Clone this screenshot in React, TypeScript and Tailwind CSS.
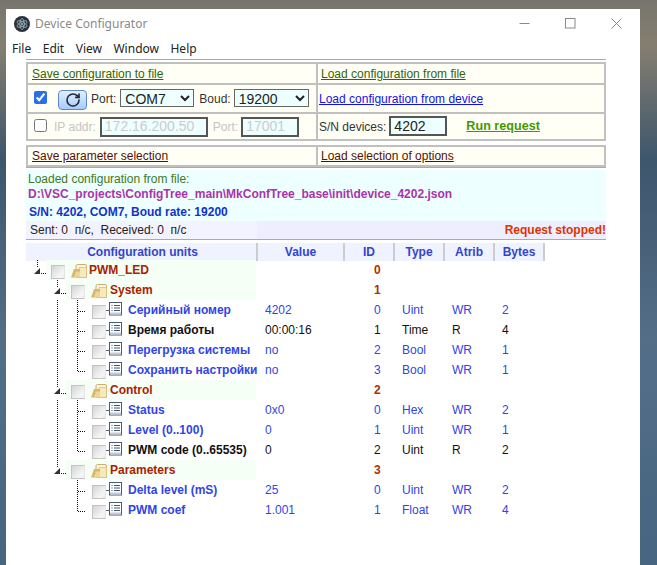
import React from "react";
import { RotateCw } from "lucide-react";

const ARIAL = "font-['Liberation_Sans',Arial,sans-serif]";

function CheckBoxIcon() {
  return (
    <span className="block w-[14px] h-[14px] shrink-0 border border-[#c4c4c4] border-r-[#e4e4e4] bg-[linear-gradient(135deg,#d4d4d4,#f6f6f6_75%,#ececec)]" />
  );
}

function FolderIcon() {
  return (
    <svg width="16" height="14" viewBox="0 0 16 14" className="shrink-0 mt-[2px]">
      <path d="M5 13.5 V2 Q5 0.5 6.5 0.5 H14 Q15.5 0.5 15.5 2 V13.5 Z" fill="#fdf6dc" stroke="#c9ae72" strokeWidth="1" />
      <path d="M8 13.5 V3.5 H15.5 V13.5 Z" fill="#f8e9bb" stroke="#d6bf87" strokeWidth="0.8" />
      <path d="M0 13.5 L3 5 H9 V13.5 Z" fill="#d8b870" />
      <path d="M3 13.5 L5 7.5 H9 V13.5 Z" fill="#ecd595" />
    </svg>
  );
}

function DocIcon() {
  return (
    <svg width="16" height="14" viewBox="0 0 16 14" className="shrink-0 -mt-[2px]">
      <path d="M0 8.5 H3" stroke="#55657a" strokeWidth="1" />
      <rect x="3.5" y="0.5" width="12" height="12.5" fill="#fff" stroke="#4a5a70" strokeWidth="1" />
      <path d="M5.5 3.5 H6.5 M8 3.5 H14 M5.5 6 H6.5 M8 6 H14 M5.5 8.5 H6.5 M8 8.5 H14" stroke="#3f5878" strokeWidth="1" />
      <rect x="4" y="10.5" width="11" height="2" fill="#c5ccd6" />
    </svg>
  );
}

function Connector({ level, trunk, last }: { level: number; trunk: boolean; last: boolean }) {
  const width = level === 0 ? 20 : level === 1 ? 40 : 60;
  const dot = { stroke: "#111", strokeWidth: 1, strokeDasharray: "1 1", fill: "none" } as const;
  return (
    <svg width={width} height="20" viewBox={`0 0 ${width} 20`} className="shrink-0">
      {level === 0 && (
        <>
          <path d="M11.5 0 V8" {...dot} />
          <path d="M8 14 L14 8 V14 Z" fill="#333" />
          <path d="M15 13.5 H20" {...dot} />
        </>
      )}
      {level === 1 && (
        <>
          <path d="M31.5 0 V8" {...dot} />
          <path d="M28 14 L34 8 V14 Z" fill="#333" />
          <path d="M35 13.5 H40" {...dot} />
        </>
      )}
      {level === 2 && (
        <>
          {trunk && <path d="M31.5 0 V20" {...dot} />}
          <path d={last ? "M51.5 0 V11" : "M51.5 0 V20"} {...dot} />
          <path d="M52 11.5 H60" {...dot} />
        </>
      )}
    </svg>
  );
}

type Row = {
  level: number;
  name: string;
  value?: string;
  id: string;
  type?: string;
  atrib?: string;
  bytes?: string;
  ro?: boolean;
  trunk?: boolean;
  last?: boolean;
};

const rows: Row[] = [
  { level: 0, name: "PWM_LED", id: "0" },
  { level: 1, name: "System", id: "1" },
  { level: 2, name: "Серийный номер", value: "4202", id: "0", type: "Uint", atrib: "WR", bytes: "2", trunk: true },
  { level: 2, name: "Время работы", value: "00:00:16", id: "1", type: "Time", atrib: "R", bytes: "4", ro: true, trunk: true },
  { level: 2, name: "Перегрузка системы", value: "no", id: "2", type: "Bool", atrib: "WR", bytes: "1", trunk: true },
  { level: 2, name: "Сохранить настройки", value: "no", id: "3", type: "Bool", atrib: "WR", bytes: "1", trunk: true, last: true },
  { level: 1, name: "Control", id: "2" },
  { level: 2, name: "Status", value: "0x0", id: "0", type: "Hex", atrib: "WR", bytes: "2", trunk: true },
  { level: 2, name: "Level (0..100)", value: "0", id: "1", type: "Uint", atrib: "WR", bytes: "1", trunk: true },
  { level: 2, name: "PWM code (0..65535)", value: "0", id: "2", type: "Uint", atrib: "R", bytes: "2", ro: true, trunk: true, last: true },
  { level: 1, name: "Parameters", id: "3" },
  { level: 2, name: "Delta level (mS)", value: "25", id: "0", type: "Uint", atrib: "WR", bytes: "2" },
  { level: 2, name: "PWM coef", value: "1.001", id: "1", type: "Float", atrib: "WR", bytes: "4", last: true },
];

const GRID = "grid grid-cols-[232px_87px_50px_50px_50px_50px]";
const HEAD = "h-full flex items-center justify-center border-r-2 border-[#cccccc] bg-[#eef3ff]";

function TreeRow({ r }: { r: Row }) {
  const isGroup = r.level < 2;
  const color = r.ro ? "text-[#111111]" : "text-[#2f45e6]";
  return (
    <div className={`${GRID} h-5 items-center text-[12px]`}>
      <div className="flex items-center h-5 w-[232px] overflow-hidden whitespace-nowrap">
        <Connector level={r.level} trunk={!!r.trunk} last={!!r.last} />
        {isGroup ? (
          <div className="flex-1 h-5 flex items-center bg-[#f5fff5] mr-[2px]">
            <span className="ml-[5px] mt-[4px]">
              <CheckBoxIcon />
            </span>
            <span className="ml-[6px]">
              <FolderIcon />
            </span>
            <span className={`${r.level === 1 ? "ml-[3px]" : "ml-[2px]"} font-bold text-[#aa2200]`}>{r.name}</span>
          </div>
        ) : (
          <div className="flex items-center h-5">
            <span className="ml-[6px] mt-[4px]">
              <CheckBoxIcon />
            </span>
            <DocIcon />
            <span className={`ml-[6px] font-bold ${color}`}>{r.name}</span>
          </div>
        )}
      </div>
      <div className={`pl-[7px] ${color}`}>{r.value}</div>
      <div className={isGroup ? "pl-[29px] font-bold text-[#aa3300]" : `pl-[29px] ${color}`}>{r.id}</div>
      <div className={`pl-[7px] ${color}`}>{r.type}</div>
      <div className={`pl-[7px] ${color}`}>{r.atrib}</div>
      <div className={`pl-[7px] ${color}`}>{r.bytes}</div>
    </div>
  );
}

function DarkInput({ value, disabled, w }: { value: string; disabled?: boolean; w: string }) {
  return (
    <input
      readOnly
      value={value}
      disabled={disabled}
      className={`${w} h-[20px] px-[3px] border-2 border-[#555555] bg-[#eeffff] text-[14px] ${ARIAL} ${disabled ? "text-[#cccccc]" : "text-[#222222]"} outline-none`}
    />
  );
}

function Select({ value, w }: { value: string; w: string }) {
  return (
    <select
      value={value}
      onChange={() => {}}
      className={`${w} h-[18px] border border-[#666666] bg-[#eeffff] text-[14px] text-[#222222] ${ARIAL}`}
    >
      <option>{value}</option>
    </select>
  );
}

export default function App() {
  return (
    <div className="w-[657px] h-[565px] overflow-hidden pt-[9px] pl-[6px] bg-[linear-gradient(180deg,#77756e_0%,#857e70_8%,#3e566c_28%,#546e88_60%,#466580_100%)]">
      <div className="w-[634px] h-[556px] bg-white flex flex-col text-[12px]">
        {/* Title bar */}
        <div className="h-[29px] flex items-center pl-[8px] pr-[18px] shrink-0 font-['Noto_Sans',sans-serif]">
          <svg width="16" height="16" viewBox="0 0 16 16" className="shrink-0">
            <circle cx="8" cy="8" r="8" fill="#2b3138" />
            <g fill="none" stroke="#a9c4d4" strokeWidth="0.7">
              <ellipse cx="8" cy="8" rx="5.5" ry="2.2" transform="rotate(30 8 8)" />
              <ellipse cx="8" cy="8" rx="5.5" ry="2.2" transform="rotate(90 8 8)" />
              <ellipse cx="8" cy="8" rx="5.5" ry="2.2" transform="rotate(150 8 8)" />
            </g>
            <circle cx="8" cy="8" r="1" fill="#a9c4d4" />
          </svg>
          <span className="ml-[5px] text-[#8a8a8a]">Device Configurator</span>
          <div className="ml-auto flex items-center gap-[35px]">
            <svg width="11" height="11" viewBox="0 0 11 11"><path d="M0.5 5.5 H10.5" stroke="#8a8a8a" /></svg>
            <svg width="11" height="11" viewBox="0 0 11 11"><rect x="0.5" y="0.5" width="9.5" height="9.5" fill="none" stroke="#8a8a8a" /></svg>
            <svg width="11" height="11" viewBox="0 0 11 11"><path d="M0.5 0.5 L10.5 10.5 M10.5 0.5 L0.5 10.5" stroke="#8a8a8a" /></svg>
          </div>
        </div>
        {/* Menu */}
        <div className="h-[20px] pt-[2px] flex items-center gap-[11.5px] pl-[6px] text-[#222222] shrink-0 font-['Noto_Sans',sans-serif]">
          <span>File</span>
          <span>Edit</span>
          <span>View</span>
          <span>Window</span>
          <span>Help</span>
        </div>
        {/* Content */}
        <div className={`ml-[20px] w-[580px] mt-[1px] ${ARIAL}`}>
          <div className="border-t border-[#aaaaaa] pt-[2px]">
            <div className="grid grid-cols-[288px_286px] gap-[2px] bg-[#c0c0c0] border-[2px] border-[#c0c0c0]">
              <div className="h-[19px] bg-[#fffff6] flex items-center pl-[4px]">
                <a className="underline text-[#336600]">Save configuration to file</a>
              </div>
              <div className="h-[19px] bg-[#fffff6] flex items-center pl-[3px]">
                <a className="underline text-[#336600]">Load configuration from file</a>
              </div>
              <div className="h-[27px] bg-[#fffff6] flex items-center pl-[6px] text-[#333333]">
                <input type="checkbox" checked readOnly className="w-[13px] h-[13px] accent-[#2b6fe8] m-0 -mt-[3px]" />
                <button className="ml-[11px] mt-[3px] w-[29px] h-[20px] flex items-center justify-center rounded-[4px] border border-[#5b8ac8] bg-[linear-gradient(180deg,#e2efff,#a6ccfb)]">
                  <RotateCw size={16} strokeWidth={2.4} color="#1f2937" />
                </button>
                <span className="ml-[4px]">Port:</span>
                <span className="ml-[4px] -mt-[1px] flex"><Select value="COM7" w="w-[74px]" /></span>
                <span className="ml-[5px]">Boud:</span>
                <span className="ml-[3px] -mt-[1px] flex"><Select value="19200" w="w-[75px]" /></span>
              </div>
              <div className="h-[27px] bg-[#fffff6] flex items-center pl-[1px]">
                <a className="underline text-[#1111ee]">Load configuration from device</a>
              </div>
              <div className="h-[25px] bg-[#fffff6] flex items-center pl-[6px]">
                <input type="checkbox" readOnly className="w-[13px] h-[13px] m-0 -mt-[2px]" />
                <span className="ml-[7px] text-[#c4c4c4]">IP addr:</span>
                <span className="ml-[4px] flex"><DarkInput value="172.16.200.50" disabled w="w-[108px]" /></span>
                <span className="ml-[5px] text-[#c4c4c4]">Port:</span>
                <span className="ml-[3px] flex"><DarkInput value="17001" disabled w="w-[58px]" /></span>
              </div>
              <div className="h-[25px] bg-[#fffff6] flex items-center pl-[1px] text-[#333333]">
                <span>S/N devices:</span>
                <span className="ml-[3px] -mt-[1px] flex"><DarkInput value="4202" w="w-[58px]" /></span>
                <a className="ml-[19px] underline font-bold text-[12.6px] text-[#449900]">Run request</a>
              </div>
            </div>
            <div className="h-[4px] bg-white" />
            <div className="grid grid-cols-[288px_286px] gap-[2px] bg-[#c0c0c0] border-[2px] border-[#c0c0c0]">
              <div className="h-[18px] bg-[#fffff6] flex items-center pl-[4px]">
                <a className="underline text-[#551100]">Save parameter selection</a>
              </div>
              <div className="h-[18px] bg-[#fffff6] flex items-center pl-[3px]">
                <a className="underline text-[#551100]">Load selection of options</a>
              </div>
            </div>
          </div>
          <div className="border-t border-[#aaaaaa] pt-[2px]">
            <div className="h-[51px] bg-[#eeffff] pl-[2px] flex flex-col pt-[2px]">
              <div className="h-[15px] leading-[15px] text-[#447722]">Loaded configuration from file:</div>
              <div className="h-[15px] leading-[15px] font-bold text-[#aa33aa]">D:\VSC_projects\ConfigTree_main\MkConfTree_base\init\device_4202.json</div>
              <div className="h-[18px] leading-[20px] font-bold text-[#1133cc] pl-[1px]">S/N: 4202, COM7, Boud rate: 19200</div>
            </div>
            <div className="h-[18px] flex bg-[#eeeeff]">
              <div className="w-[231px] bg-[#f3f3ff] pl-[4px] flex items-center text-[#222222] whitespace-pre">Sent: 0  п/с,  Received: 0  п/с</div>
              <div className="flex-1 flex items-center justify-end font-bold text-[#dd3300]">Request stopped!</div>
            </div>
            <div className="border-t border-[#aaaaaa] h-[4px]" />
          </div>
          <div className={`${GRID} h-[17px] font-bold text-[#3344cc]`}>
            <div className={`${HEAD} pl-[3px]`}>Configuration units</div>
            <div className={HEAD}>Value</div>
            <div className={HEAD}>ID</div>
            <div className={HEAD}>Type</div>
            <div className={HEAD}>Atrib</div>
            <div className={HEAD}>Bytes</div>
          </div>
          {rows.map((r, i) => (
            <TreeRow key={i} r={r} />
          ))}
        </div>
      </div>
    </div>
  );
}
